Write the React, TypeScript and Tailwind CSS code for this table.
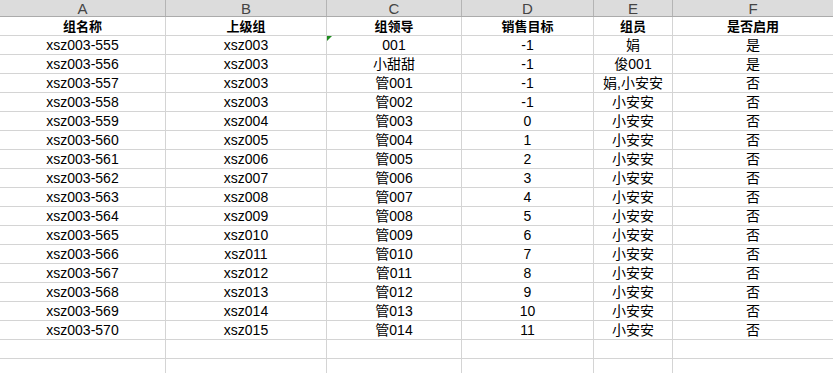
const columns = ['A', 'B', 'C', 'D', 'E', 'F'];

const header = ['组名称', '上级组', '组领导', '销售目标', '组员', '是否启用'];

const rows: string[][] = [
  ['xsz003-555', 'xsz003', '001', '-1', '娟', '是'],
  ['xsz003-556', 'xsz003', '小甜甜', '-1', '俊001', '是'],
  ['xsz003-557', 'xsz003', '管001', '-1', '娟,小安安', '否'],
  ['xsz003-558', 'xsz003', '管002', '-1', '小安安', '否'],
  ['xsz003-559', 'xsz004', '管003', '0', '小安安', '否'],
  ['xsz003-560', 'xsz005', '管004', '1', '小安安', '否'],
  ['xsz003-561', 'xsz006', '管005', '2', '小安安', '否'],
  ['xsz003-562', 'xsz007', '管006', '3', '小安安', '否'],
  ['xsz003-563', 'xsz008', '管007', '4', '小安安', '否'],
  ['xsz003-564', 'xsz009', '管008', '5', '小安安', '否'],
  ['xsz003-565', 'xsz010', '管009', '6', '小安安', '否'],
  ['xsz003-566', 'xsz011', '管010', '7', '小安安', '否'],
  ['xsz003-567', 'xsz012', '管011', '8', '小安安', '否'],
  ['xsz003-568', 'xsz013', '管012', '9', '小安安', '否'],
  ['xsz003-569', 'xsz014', '管013', '10', '小安安', '否'],
  ['xsz003-570', 'xsz015', '管014', '11', '小安安', '否'],
  ['', '', '', '', '', ''],
  ['', '', '', '', '', ''],
];

const grid = 'grid grid-cols-[166px_161px_135px_132px_79px_160px]';

export default function App() {
  return (
    <div
      className="w-[833px] h-[373px] overflow-hidden bg-white text-black"
      style={{ fontFamily: '"Liberation Sans", "Noto Sans CJK SC", sans-serif' }}
    >
      {/* column letters */}
      <div className={`${grid} h-[17px] bg-[#dcdcdc] border-b border-[#ababab]`}>
        {columns.map((c, i) => (
          <div
            key={c}
            className={`flex items-center justify-center text-[15px] leading-none text-[#444] ${
              i < columns.length - 1 ? 'border-r border-[#b4b4b4]' : ''
            }`}
          >
            {c}
          </div>
        ))}
      </div>

      {/* header row */}
      <div className={grid}>
        {header.map((h, i) => (
          <div
            key={h}
            className={`h-[19px] flex items-center justify-center border-b border-[#d4d4d4] text-[13px] font-bold leading-none ${
              i < header.length - 1 ? 'border-r' : ''
            }`}
          >
            {h}
          </div>
        ))}
      </div>

      {rows.map((row, r) => (
        <div key={r} className={grid}>
          {row.map((cell, i) => (
            <div
              key={i}
              className={`relative h-[19px] flex items-center justify-center border-b border-[#d4d4d4] text-[14px] leading-none ${
                i < row.length - 1 ? 'border-r' : ''
              }`}
            >
              {r === 0 && i === 2 && (
                <span className="absolute left-0 top-0 w-0 h-0 border-t-[5px] border-r-[5px] border-t-[#1e8c1e] border-r-transparent" />
              )}
              {cell}
            </div>
          ))}
        </div>
      ))}
    </div>
  );
}
